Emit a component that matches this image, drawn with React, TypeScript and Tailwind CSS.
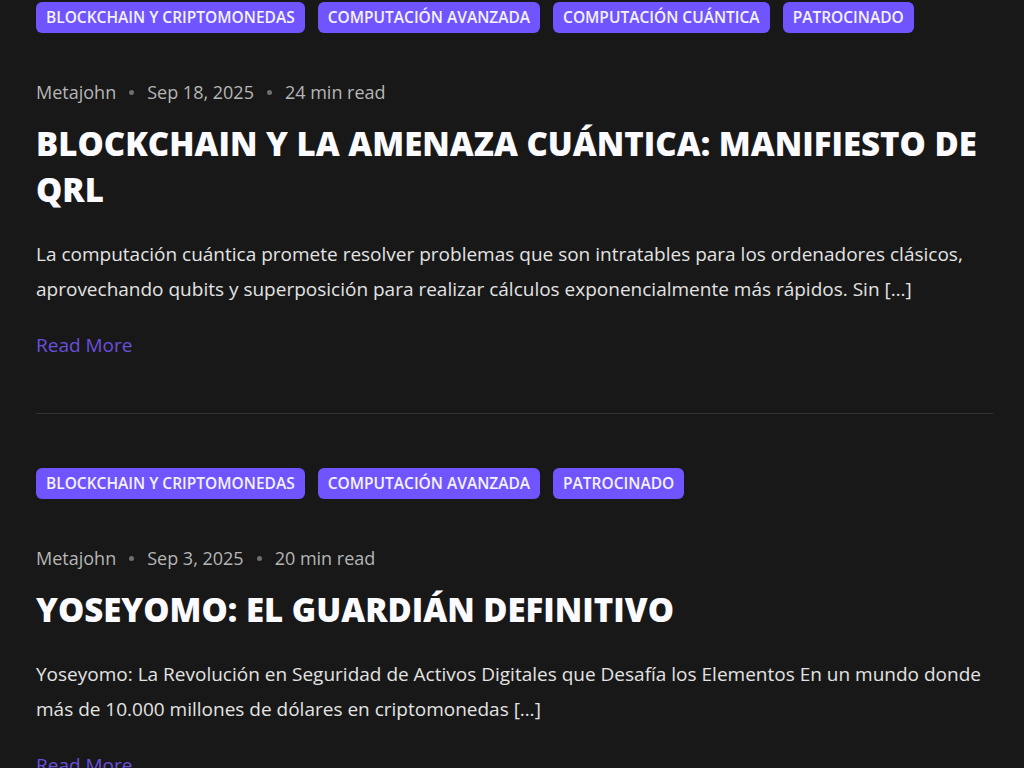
import React from "react";

type Post = {
  tags: string[];
  author: string;
  date: string;
  read: string;
  title: string;
  excerpt: string;
};

const posts: Post[] = [
  {
    tags: ["Blockchain y Criptomonedas", "Computación Avanzada", "Computación Cuántica", "Patrocinado"],
    author: "Metajohn",
    date: "Sep 18, 2025",
    read: "24 min read",
    title: "Blockchain y la Amenaza Cuántica: Manifiesto de QRL",
    excerpt:
      "La computación cuántica promete resolver problemas que son intratables para los ordenadores clásicos, aprovechando qubits y superposición para realizar cálculos exponencialmente más rápidos. Sin […]",
  },
  {
    tags: ["Blockchain y Criptomonedas", "Computación Avanzada", "Patrocinado"],
    author: "Metajohn",
    date: "Sep 3, 2025",
    read: "20 min read",
    title: "Yoseyomo: El Guardián Definitivo",
    excerpt:
      "Yoseyomo: La Revolución en Seguridad de Activos Digitales que Desafía los Elementos En un mundo donde más de 10.000 millones de dólares en criptomonedas […]",
  },
];

function Dot() {
  return <span className="inline-block w-[5px] h-[5px] rounded-full bg-[#6f6f6f]" />;
}

function Article({ post, first }: { post: Post; first: boolean }) {
  return (
    <article className={first ? "pt-[2px] pb-[54px] border-b border-[#333333]" : "pt-[54px] pb-[54px]"}>
      <div className="flex flex-wrap gap-[13px]">
        {post.tags.map((t) => (
          <span
            key={t}
            className="bg-[#7055ff] text-[#f4f2ff] uppercase rounded-[6px] px-[10px] h-[31px] flex items-center text-[15.5px] font-semibold leading-none"
          >
            {t}
          </span>
        ))}
      </div>
      <div className="mt-[47px] flex items-center gap-[13px] text-[18px] leading-[24px] text-[#b5b5b5]">
        <span>{post.author}</span>
        <Dot />
        <span>{post.date}</span>
        <Dot />
        <span>{post.read}</span>
      </div>
      <h2 className="mt-[17px] uppercase text-[#fafaff] text-[33px] leading-[46px] font-extrabold">
        {post.title}
      </h2>
      <p className="mt-[24px] text-[19px] leading-[35px] text-[#e3e3e3]">{post.excerpt}</p>
      <a className="mt-[24px] block text-[19px] leading-[28px] text-[#6a4fdd]">Read More</a>
    </article>
  );
}

export default function App() {
  return (
    <div
      className="min-h-screen bg-[#181818] overflow-hidden"
      style={{ fontFamily: "'Open Sans', 'Noto Sans', sans-serif" }}
    >
      <div className="pl-[36px] pr-[31px]">
        {posts.map((p, i) => (
          <Article key={i} post={p} first={i === 0} />
        ))}
      </div>
    </div>
  );
}
